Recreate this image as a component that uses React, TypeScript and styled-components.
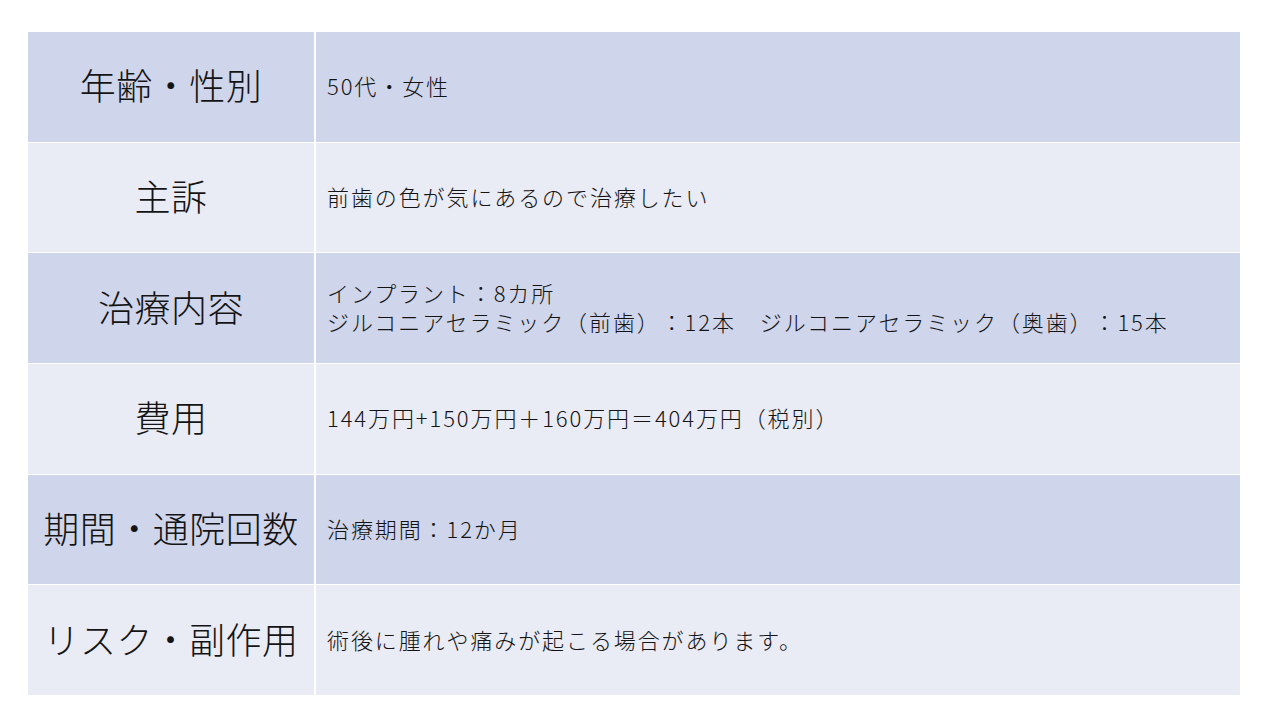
import React from "react";
import styled, { createGlobalStyle } from "styled-components";

const GlobalStyle = createGlobalStyle`
  html, body {
    margin: 0;
    padding: 0;
    background: #ffffff;
  }
  body {
    font-family: "Noto Sans CJK JP", "Noto Sans", sans-serif;
    color: #141414;
  }
`;

const Page = styled.div`
  width: 1280px;
  height: 720px;
  padding: 32px 40px 0 28px;
  box-sizing: border-box;
`;

const Table = styled.div`
  display: grid;
  grid-template-columns: 286px 1fr;
  grid-template-rows: repeat(6, 1fr);
  column-gap: 2px;
  row-gap: 1px;
  width: 1212px;
  height: 663px;
  background: #ffffff;
`;

const HeadCell = styled.div<{ $dark: boolean }>`
  background: ${(p) => (p.$dark ? "#cfd5ea" : "#e9ebf5")};
  display: flex;
  align-items: center;
  justify-content: center;
  padding-bottom: 5px;
  font-size: 36px;
  font-weight: 300;
  white-space: nowrap;
  letter-spacing: 0.5px;
  text-spacing-trim: space-all;
`;

const BodyCell = styled.div<{ $dark: boolean }>`
  background: ${(p) => (p.$dark ? "#cfd5ea" : "#e9ebf5")};
  display: flex;
  flex-direction: column;
  justify-content: center;
  padding: 0 11px 2px;
  font-size: 22px;
  font-weight: 300;
  line-height: 29px;
  letter-spacing: 1.9px;
  white-space: nowrap;
  text-spacing-trim: space-all;
`;

const rows: { head: string; body: string[] }[] = [
  { head: "年齢・性別", body: ["50代・女性"] },
  { head: "主訴", body: ["前歯の色が気にあるので治療したい"] },
  {
    head: "治療内容",
    body: [
      "インプラント：8カ所",
      "ジルコニアセラミック（前歯）：12本　ジルコニアセラミック（奥歯）：15本",
    ],
  },
  { head: "費用", body: ["144万円+150万円＋160万円＝404万円（税別）"] },
  { head: "期間・通院回数", body: ["治療期間：12か月"] },
  { head: "リスク・副作用", body: ["術後に腫れや痛みが起こる場合があります。"] },
];

export default function App() {
  return (
    <>
      <GlobalStyle />
      <Page>
        <Table>
          {rows.map((r, i) => (
            <React.Fragment key={r.head}>
              <HeadCell $dark={i % 2 === 0}>{r.head}</HeadCell>
              <BodyCell $dark={i % 2 === 0}>
                {r.body.map((line) => (
                  <div key={line}>{line}</div>
                ))}
              </BodyCell>
            </React.Fragment>
          ))}
        </Table>
      </Page>
    </>
  );
}
